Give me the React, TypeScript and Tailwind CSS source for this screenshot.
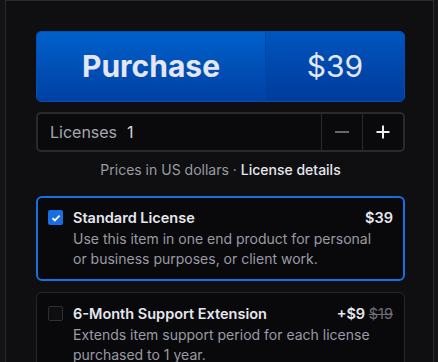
import React from 'react';

export default function App() {
  return (
    <div className="w-[438px] h-[362px] bg-[#141416] pl-[5px] pr-[4px] overflow-hidden" style={{ fontFamily: 'Inter, "Noto Sans", sans-serif' }}>
      <div className="h-full bg-[#0f0f12] border-l border-r border-t border-[#2a2a2e] pl-[30px] pt-[30px]">
        <div className="w-[369px] flex flex-col">
          <button className="h-[71px] flex rounded-[5px] overflow-hidden text-[#e4e6f2] border border-[#0050b8]">
            <span className="w-[228px] h-full flex items-center justify-center text-[30px] font-bold bg-gradient-to-b from-[#0061cb] to-[#003fa3]">
              Purchase
            </span>
            <span className="flex-1 h-full flex items-center justify-center text-[30px] border-l border-[#0046a8] bg-gradient-to-b from-[#0055bf] to-[#003b9b]">
              $39
            </span>
          </button>

          <div className="mt-[10px] h-[40px] flex rounded-[5px] border-2 border-[#2a2a2e] bg-[#0a0a0d]">
            <div className="flex-1 flex items-center pl-[12px] text-[16px]">
              <span className="text-[#a6a7b0]">Licenses</span>
              <span className="ml-[10px] text-[#d4d5dc]">1</span>
            </div>
            <div className="w-[41px] flex items-center justify-center border-l border-[#2a2a2e]">
              <span className="w-[14px] h-[2px] bg-[#66676e]" />
            </div>
            <div className="w-[41px] flex items-center justify-center border-l border-[#2a2a2e]">
              <svg width="16" height="16" viewBox="0 0 16 16">
                <path d="M8 1.5v13M1.5 8h13" stroke="#ecedf2" strokeWidth="2" />
              </svg>
            </div>
          </div>

          <p className="mt-[8px] text-center text-[14px] leading-[20px]">
            <span className="text-[#9a9ba4]">Prices in US dollars · </span>
            <span className="text-[#e6e7ee] font-medium">License details</span>
          </p>

          <div className="mt-[16px] h-[85px] rounded-[6px] border-2 border-[#1570e0] bg-[#09090c] flex pl-[10px] pr-[10px] pt-[10px]">
            <div className="w-[15px] h-[15px] mt-[2px] rounded-[2px] bg-[#1a6fe0] flex items-center justify-center">
              <svg width="10" height="10" viewBox="0 0 10 10">
                <path d="M1.5 5.2l2.3 2.3L8.6 2.6" stroke="#ffffff" strokeWidth="1.8" fill="none" />
              </svg>
            </div>
            <div className="flex-1 ml-[10px]">
              <div className="flex justify-between text-[14.5px] leading-[20px] font-semibold text-[#e6e7ee]">
                <span>Standard License</span>
                <span>$39</span>
              </div>
              <p className="text-[14px] leading-[20px] text-[#9a9ba4] pr-[20px] mt-[1px]">
                Use this item in one end product for personal or business purposes, or client work.
              </p>
            </div>
          </div>

          <div className="mt-[11px] h-[85px] rounded-[6px] border border-[#26262a] bg-[#09090c] flex pl-[11px] pr-[11px] pt-[11px]">
            <div className="w-[15px] h-[15px] mt-[2px] rounded-[2px] border border-[#2e2e33] bg-[#0e0e11]" />
            <div className="flex-1 ml-[10px]">
              <div className="flex justify-between text-[14.5px] leading-[20px] font-semibold text-[#e6e7ee]">
                <span>6-Month Support Extension</span>
                <span>
                  +$9 <span className="font-normal text-[#6e6f77] line-through">$19</span>
                </span>
              </div>
              <p className="text-[14px] leading-[20px] text-[#9a9ba4] pr-[20px] mt-[1px]">
                Extends item support period for each license purchased to 1 year.
              </p>
            </div>
          </div>
        </div>
      </div>
    </div>
  );
}
